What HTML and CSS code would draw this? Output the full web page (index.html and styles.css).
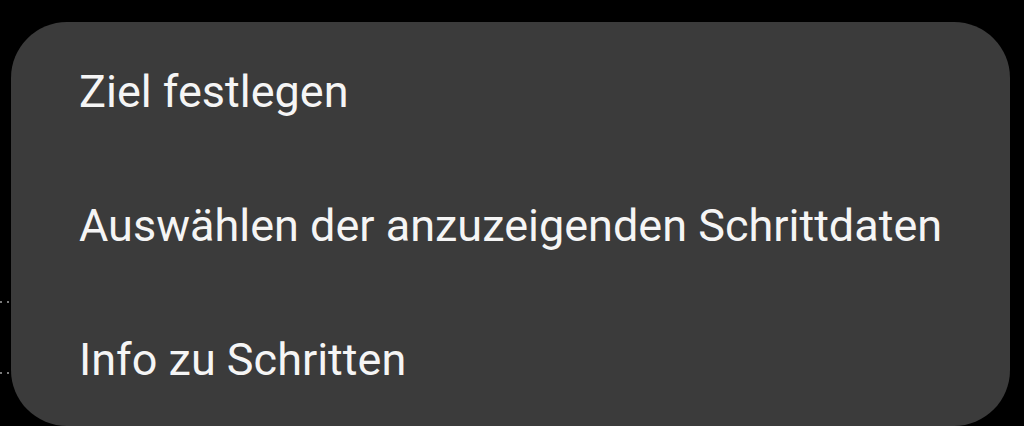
FILE: index.html
```html
<!DOCTYPE html>
<html lang="de">

<head>
    <meta charset="UTF-8">
    <meta name="viewport" content="width=device-width, initial-scale=1.0">
    <title>Schritte Menü</title>
    <link rel="stylesheet" href="styles.css">
</head>

<body>
    <div class="dots dots-top"><span></span><span></span></div>
    <div class="dots dots-bottom"><span></span><span></span></div>
    <ul class="menu">
        <li class="menu-item">Ziel festlegen</li>
        <li class="menu-item">Auswählen der anzuzeigenden Schrittdaten</li>
        <li class="menu-item">Info zu Schritten</li>
    </ul>
</body>

</html>
```

FILE: styles.css
```css
html,
body {
    margin: 0;
    padding: 0;
    height: 426px;
    overflow: hidden;
    background-color: #000;
}

body {
    position: relative;
    font-family: Roboto, "Noto Sans", sans-serif;
}

.menu {
    list-style: none;
    margin: 22px 14px 0 11px;
    padding: 3px 0 0;
    height: 404px;
    box-sizing: border-box;
    background-color: #3b3b3b;
    border-radius: 56px;
}

.menu-item {
    height: 134px;
    line-height: 134px;
    padding-left: 68px;
    font-size: 45px;
    color: #f5f5f5;
    white-space: nowrap;
}

/* faint dots peeking out from the screen behind */
.dots {
    position: absolute;
    left: 0;
    display: flex;
    gap: 5px;
}

.dots span {
    width: 2px;
    height: 2px;
    background-color: #7a7a7a;
}

.dots-top {
    top: 301px;
}

.dots-bottom {
    top: 372px;
}
```
